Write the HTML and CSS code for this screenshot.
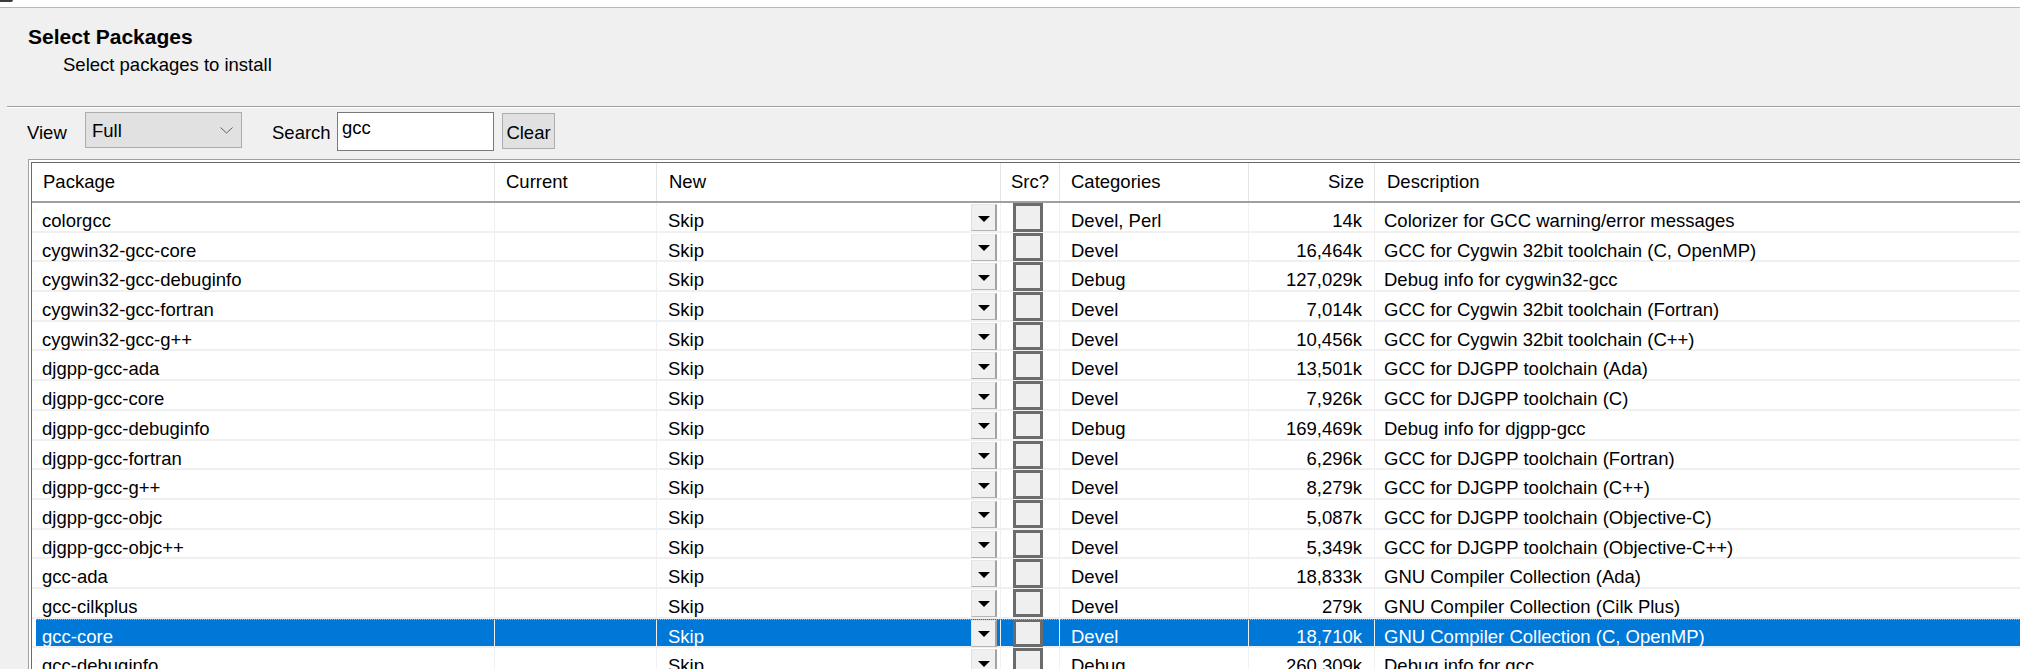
FILE: index.html
```html
<!DOCTYPE html>
<html lang="en">
<head>
<meta charset="utf-8">
<title>Select Packages</title>
<link rel="stylesheet" href="styles.css">
</head>
<body>
<div class="topbar"><span class="topmark"></span></div>
<div class="head">
  <div class="title">Select Packages</div>
  <div class="subtitle">Select packages to install</div>
</div>
<div class="sep"></div>
<div class="toolbar">
  <span class="lbl lbl-view">View</span>
  <div class="combo"><span>Full</span><svg class="chev" width="13" height="7" viewBox="0 0 13 7"><polyline points="0.5,0.5 6.5,6 12.5,0.5" fill="none" stroke="#606060" stroke-width="1"/></svg></div>
  <span class="lbl lbl-search">Search</span>
  <div class="input">gcc</div>
  <div class="btn">Clear</div>
</div>
<div class="frame">
  <div class="inner">
    <div class="row hdr">
      <div class="h">Package</div>
      <div class="h">Current</div>
      <div class="h h-new">New</div>
      <div class="h h-src">Src?</div>
      <div class="h">Categories</div>
      <div class="h h-size">Size</div>
      <div class="h h-desc">Description</div>
    </div>

    <div class="row"><div class="c">colorgcc</div><div class="c"></div><div class="c c-new"><span class="t">Skip</span><span class="dd"><i></i></span></div><div class="c c-src"><span class="cb"></span></div><div class="c c-cat">Devel, Perl</div><div class="c c-size">14k</div><div class="c c-desc">Colorizer for GCC warning/error messages</div></div>
    <div class="row"><div class="c">cygwin32-gcc-core</div><div class="c"></div><div class="c c-new"><span class="t">Skip</span><span class="dd"><i></i></span></div><div class="c c-src"><span class="cb"></span></div><div class="c c-cat">Devel</div><div class="c c-size">16,464k</div><div class="c c-desc">GCC for Cygwin 32bit toolchain (C, OpenMP)</div></div>
    <div class="row"><div class="c">cygwin32-gcc-debuginfo</div><div class="c"></div><div class="c c-new"><span class="t">Skip</span><span class="dd"><i></i></span></div><div class="c c-src"><span class="cb"></span></div><div class="c c-cat">Debug</div><div class="c c-size">127,029k</div><div class="c c-desc">Debug info for cygwin32-gcc</div></div>
    <div class="row"><div class="c">cygwin32-gcc-fortran</div><div class="c"></div><div class="c c-new"><span class="t">Skip</span><span class="dd"><i></i></span></div><div class="c c-src"><span class="cb"></span></div><div class="c c-cat">Devel</div><div class="c c-size">7,014k</div><div class="c c-desc">GCC for Cygwin 32bit toolchain (Fortran)</div></div>
    <div class="row"><div class="c">cygwin32-gcc-g++</div><div class="c"></div><div class="c c-new"><span class="t">Skip</span><span class="dd"><i></i></span></div><div class="c c-src"><span class="cb"></span></div><div class="c c-cat">Devel</div><div class="c c-size">10,456k</div><div class="c c-desc">GCC for Cygwin 32bit toolchain (C++)</div></div>
    <div class="row"><div class="c">djgpp-gcc-ada</div><div class="c"></div><div class="c c-new"><span class="t">Skip</span><span class="dd"><i></i></span></div><div class="c c-src"><span class="cb"></span></div><div class="c c-cat">Devel</div><div class="c c-size">13,501k</div><div class="c c-desc">GCC for DJGPP toolchain (Ada)</div></div>
    <div class="row"><div class="c">djgpp-gcc-core</div><div class="c"></div><div class="c c-new"><span class="t">Skip</span><span class="dd"><i></i></span></div><div class="c c-src"><span class="cb"></span></div><div class="c c-cat">Devel</div><div class="c c-size">7,926k</div><div class="c c-desc">GCC for DJGPP toolchain (C)</div></div>
    <div class="row"><div class="c">djgpp-gcc-debuginfo</div><div class="c"></div><div class="c c-new"><span class="t">Skip</span><span class="dd"><i></i></span></div><div class="c c-src"><span class="cb"></span></div><div class="c c-cat">Debug</div><div class="c c-size">169,469k</div><div class="c c-desc">Debug info for djgpp-gcc</div></div>
    <div class="row"><div class="c">djgpp-gcc-fortran</div><div class="c"></div><div class="c c-new"><span class="t">Skip</span><span class="dd"><i></i></span></div><div class="c c-src"><span class="cb"></span></div><div class="c c-cat">Devel</div><div class="c c-size">6,296k</div><div class="c c-desc">GCC for DJGPP toolchain (Fortran)</div></div>
    <div class="row"><div class="c">djgpp-gcc-g++</div><div class="c"></div><div class="c c-new"><span class="t">Skip</span><span class="dd"><i></i></span></div><div class="c c-src"><span class="cb"></span></div><div class="c c-cat">Devel</div><div class="c c-size">8,279k</div><div class="c c-desc">GCC for DJGPP toolchain (C++)</div></div>
    <div class="row"><div class="c">djgpp-gcc-objc</div><div class="c"></div><div class="c c-new"><span class="t">Skip</span><span class="dd"><i></i></span></div><div class="c c-src"><span class="cb"></span></div><div class="c c-cat">Devel</div><div class="c c-size">5,087k</div><div class="c c-desc">GCC for DJGPP toolchain (Objective-C)</div></div>
    <div class="row"><div class="c">djgpp-gcc-objc++</div><div class="c"></div><div class="c c-new"><span class="t">Skip</span><span class="dd"><i></i></span></div><div class="c c-src"><span class="cb"></span></div><div class="c c-cat">Devel</div><div class="c c-size">5,349k</div><div class="c c-desc">GCC for DJGPP toolchain (Objective-C++)</div></div>
    <div class="row"><div class="c">gcc-ada</div><div class="c"></div><div class="c c-new"><span class="t">Skip</span><span class="dd"><i></i></span></div><div class="c c-src"><span class="cb"></span></div><div class="c c-cat">Devel</div><div class="c c-size">18,833k</div><div class="c c-desc">GNU Compiler Collection (Ada)</div></div>
    <div class="row"><div class="c">gcc-cilkplus</div><div class="c"></div><div class="c c-new"><span class="t">Skip</span><span class="dd"><i></i></span></div><div class="c c-src"><span class="cb"></span></div><div class="c c-cat">Devel</div><div class="c c-size">279k</div><div class="c c-desc">GNU Compiler Collection (Cilk Plus)</div></div>
    <div class="row sel"><div class="c">gcc-core</div><div class="c"></div><div class="c c-new"><span class="t">Skip</span><span class="dd"><i></i></span></div><div class="c c-src"><span class="cb"></span></div><div class="c c-cat">Devel</div><div class="c c-size">18,710k</div><div class="c c-desc">GNU Compiler Collection (C, OpenMP)</div></div>
    <div class="row"><div class="c">gcc-debuginfo</div><div class="c"></div><div class="c c-new"><span class="t">Skip</span><span class="dd"><i></i></span></div><div class="c c-src"><span class="cb"></span></div><div class="c c-cat">Debug</div><div class="c c-size">260,309k</div><div class="c c-desc">Debug info for gcc</div></div>
  </div>
</div>
</body>
</html>
```

FILE: styles.css
```css
html, body {
  margin: 0;
  padding: 0;
}
body {
  background: #f0f0f0;
  font-family: "Liberation Sans", Arial, sans-serif;
  font-size: 18.5px;
  color: #000;
  height: 669px;
  overflow: hidden;
}

.topbar {
  height: 7px;
  background: #fff;
  border-bottom: 1px solid #b9b9b9;
}
.topmark {
  display: block;
  width: 13px;
  height: 2px;
  background: #3c3c3c;
  border-radius: 0 0 2px 0;
}

.head {
  height: 98px;
  box-sizing: border-box;
  padding: 17px 0 0 28px;
}
.title {
  font-weight: bold;
  font-size: 21px;
  line-height: 24px;
}
.subtitle {
  margin: 5px 0 0 35px;
  line-height: 22px;
}

.sep {
  margin-left: 7px;
  height: 1px;
  background: #a0a0a0;
  border-bottom: 1px solid #fff;
}

.toolbar {
  display: flex;
  align-items: flex-start;
  height: 51px;
  box-sizing: border-box;
  padding-left: 27px;
}
.lbl {
  line-height: 20px;
  margin-top: 14.6px;
}
.lbl-view {
  width: 58px;
}
.lbl-search {
  margin-left: 30px;
  width: 65px;
}
.combo {
  position: relative;
  margin-top: 4px;
  width: 157px;
  height: 36px;
  box-sizing: border-box;
  border: 1px solid #adadad;
  background: #e1e1e1;
  padding: 8.3px 0 0 6px;
  line-height: 20px;
}
.chev {
  position: absolute;
  right: 8px;
  top: 14px;
}
.input {
  margin-top: 4px;
  width: 157px;
  height: 39px;
  box-sizing: border-box;
  border: 1px solid #7a7a7a;
  background: #fff;
  padding: 5px 0 0 4px;
  line-height: 20px;
}
.btn {
  margin-left: 8px;
  margin-top: 5px;
  width: 53px;
  height: 36px;
  box-sizing: border-box;
  border: 1px solid #adadad;
  background: #e1e1e1;
  padding-top: 8.6px;
  text-align: center;
  line-height: 20px;
}

.frame {
  margin-left: 28px;
  width: calc(100% - 28px);
  box-sizing: border-box;
  border-top: 1px solid #a0a0a0;
  border-left: 1px solid #a0a0a0;
  padding: 2px 0 0 2px;
  background: #fff;
}
.inner {
  border-top: 1px solid #696969;
  border-left: 1px solid #696969;
  background: #fff;
}

.row {
  position: relative;
  display: grid;
  grid-template-columns: 463px 162px 344px 59px 189px 126px 1fr;
  height: 29.7px;
  box-sizing: border-box;
  border-bottom: 2px solid #f0f0f0;
}
.row.hdr {
  height: 40px;
  border-bottom: 2px solid #a0a0a0;
}

.h {
  line-height: 38px;
  padding-left: 11px;
  border-right: 1px solid #e5e5e5;
  white-space: nowrap;
}
.h-new {
  padding-left: 12px;
}
.h-src {
  padding-left: 0;
  text-align: center;
}
.h-size {
  padding-left: 0;
  padding-right: 10px;
  text-align: right;
}
.h-desc {
  padding-left: 12px;
  border-right: 0;
}

.c {
  padding: 8px 0 0 10px;
  line-height: 20px;
  border-right: 1px solid #f0f0f0;
  white-space: nowrap;
}
.c-new {
  display: flex;
  align-items: flex-start;
  padding: 0 0 0 11px;
}
.c-new .t {
  padding-top: 8px;
}
.dd {
  margin-left: auto;
  margin-top: 1px;
  margin-right: 3px;
  width: 26px;
  height: 27px;
  box-sizing: border-box;
  background: #f0f0f0;
  border-top: 1px solid #e6e6e6;
  border-left: 1px solid #e0e0e0;
  border-right: 2px solid #a3a3a3;
  border-bottom: 1px solid #b4b4b4;
  display: flex;
  align-items: center;
  justify-content: center;
}
.dd i {
  display: block;
  width: 0;
  height: 0;
  margin-top: 2px;
  border-left: 6.5px solid transparent;
  border-right: 6.5px solid transparent;
  border-top: 6px solid #000;
}
.c-src {
  padding: 0 0 0 12px;
}
.cb {
  position: relative;
  display: block;
  width: 30px;
  height: 28.5px;
  box-sizing: border-box;
  border: 3px solid #6b6b6b;
  background: #efefef;
}
.c-cat {
  padding-left: 11px;
}
.c-size {
  padding-left: 0;
  padding-right: 12px;
  text-align: right;
}
.c-desc {
  padding-left: 9px;
  border-right: 0;
}

.row.sel {
  background: linear-gradient(to right, #fff 0 4px, #0078d7 4px);
  color: #fff;
}
.row.sel::before {
  content: "";
  position: absolute;
  left: 4px;
  right: 0;
  top: 0;
  height: 1px;
  z-index: 2;
  background: repeating-linear-gradient(to right, #f2a25e 0 1px, transparent 1px 2px);
}
```
